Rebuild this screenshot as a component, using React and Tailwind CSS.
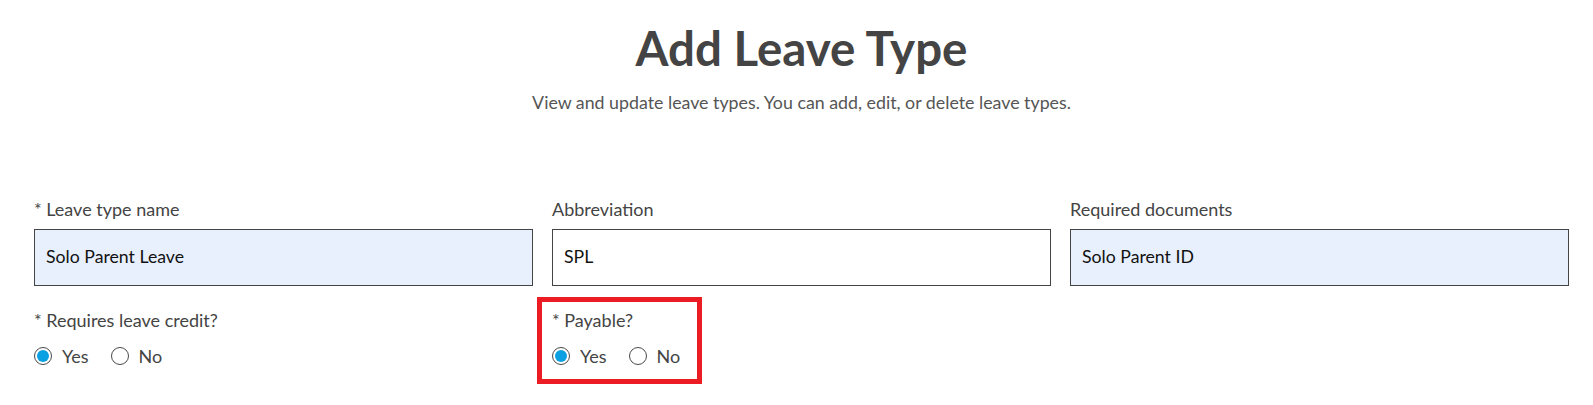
import React from "react";

function Radio({ checked }) {
  return (
    <span className="w-[18px] h-[18px] rounded-full border border-[#4a4a4a] bg-white flex items-center justify-center shrink-0">
      {checked ? <span className="w-[12px] h-[12px] rounded-full bg-[#0ba0e2]" /> : null}
    </span>
  );
}

function RadioGroup({ value }) {
  return (
    <div className="flex items-center h-[24px] mt-[12px] text-[18px] text-[#444]">
      <label className="flex items-center gap-[10px]">
        <Radio checked={value === "yes"} />
        <span>Yes</span>
      </label>
      <label className="flex items-center gap-[10px] ml-[22px]">
        <Radio checked={value === "no"} />
        <span>No</span>
      </label>
    </div>
  );
}

function Field({ label, value, filled }) {
  return (
    <div className="flex flex-col">
      <div className="text-[18px] leading-[24px] text-[#444]">{label}</div>
      <div
        className={
          "mt-[8px] h-[57px] border border-[#444] flex items-center px-[11px] text-[17.7px] text-[#111] " +
          (filled ? "bg-[#e8f0fe]" : "bg-white")
        }
      >
        {value}
      </div>
    </div>
  );
}

export default function App() {
  return (
    <div
      className="w-[1593px] h-[405px] bg-white overflow-hidden pl-[34px] pr-[24px]"
      style={{ fontFamily: "Lato, 'Open Sans', sans-serif" }}
    >
      <div className="pt-[20px] text-center">
        <h1 className="text-[47.5px] leading-[56px] font-bold text-[#444]">Add Leave Type</h1>
        <p className="mt-[14px] text-[17.8px] leading-[24px] text-[#555]">
          View and update leave types. You can add, edit, or delete leave types.
        </p>
      </div>
      <div className="mt-[83px] grid grid-cols-3 gap-x-[19px] gap-y-[22px]">
        <Field label="* Leave type name" value="Solo Parent Leave" filled />
        <Field label="Abbreviation" value="SPL" />
        <Field label="Required documents" value="Solo Parent ID" filled />
        <div className="flex flex-col">
          <div className="text-[18px] leading-[24px] text-[#444]">* Requires leave credit?</div>
          <RadioGroup value="yes" />
        </div>
        <div className="relative flex flex-col">
          <div className="text-[18px] leading-[24px] text-[#444]">* Payable?</div>
          <RadioGroup value="yes" />
          <div className="absolute left-[-15px] top-[-11px] w-[165px] h-[87px] border-[5px] border-[#ec1c24] pointer-events-none" />
        </div>
        <div />
      </div>
    </div>
  );
}
